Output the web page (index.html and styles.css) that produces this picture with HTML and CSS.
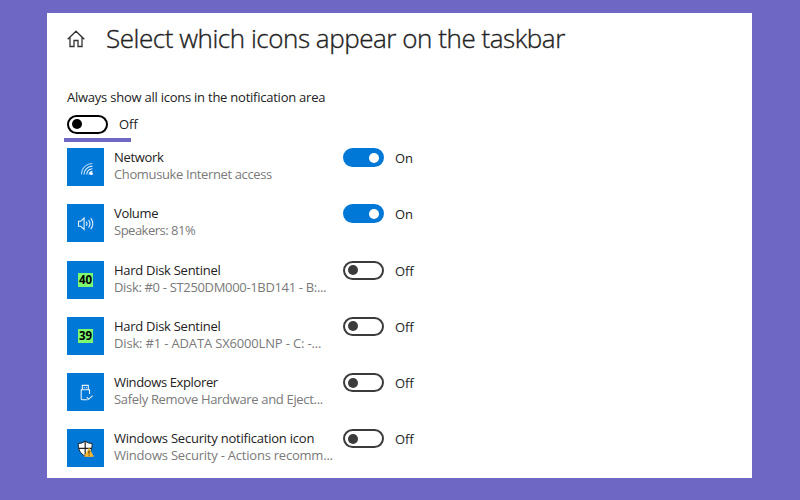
FILE: index.html
```
<!DOCTYPE html>
<html lang="en">
<head>
    <meta charset="UTF-8">
    <meta name="viewport" content="width=device-width, initial-scale=1.0">
    <title>Taskbar icons</title>
    <link rel="stylesheet" href="styles.css">
</head>
<body>
    <main class="settings">
        <header class="header">
            <svg class="home" viewBox="0 0 18 18">
                <path d="M.7 9.2 9 1.2l8.3 8M3 7.2v9.3h4v-6h4v6h4V7.2"/>
            </svg>
            <h1>Select which icons appear on the taskbar</h1>
        </header>
        <p class="all-label">Always show all icons in the notification area</p>
        <div class="all-toggle">
            <button class="toggle strong" aria-label="Always show all icons"></button>
            <span>Off</span>
        </div>
        <div class="underline"></div>
        <ul class="icon-list">
            <li>
                <div class="tile">
                    <svg viewBox="0 0 37 37">
                        <g class="line">
                            <path class="faint" d="M14.4 25.5A11 11 0 0 1 25.4 14.5"/>
                            <path d="M17 25.5a8.4 8.4 0 0 1 8.4-8.4M19.7 25.5a5.7 5.7 0 0 1 5.7-5.7M22.2 25.5a3.2 3.2 0 0 1 3.2-3.2"/>
                        </g>
                        <circle cx="24.4" cy="24.5" r="1.5" fill="#fff"/>
                    </svg>
                </div>
                <div class="info"><h2 class="network">Network</h2><p class="access">Chomusuke Internet access</p></div>
                <button class="toggle on" aria-label="Network"></button>
                <span class="state">On</span>
            </li>
            <li>
                <div class="tile">
                    <svg viewBox="0 0 37 37">
                        <path class="line" d="M11.5 16.2h2.3l3.3-3.2v11.5l-3.3-3.2h-2.3zM19.3 16.7q1.5 2 0 4.1M21.5 15q3 3.8 0 7.5M23.7 13.2q4.2 5.5 0 11"/>
                    </svg>
                </div>
                <div class="info"><h2 class="volume">Volume</h2><p class="speakers">Speakers: 81%</p></div>
                <button class="toggle on" aria-label="Volume"></button>
                <span class="state">On</span>
            </li>
            <li>
                <div class="tile"><span class="temp">40</span></div>
                <div class="info"><h2 class="disk">Hard Disk Sentinel</h2><p class="disk0">Disk: #0 - ST250DM000-1BD141 - B:...</p></div>
                <button class="toggle" aria-label="Hard Disk Sentinel"></button>
                <span class="state">Off</span>
            </li>
            <li>
                <div class="tile"><span class="temp">39</span></div>
                <div class="info"><h2 class="disk">Hard Disk Sentinel</h2><p class="disk1">Disk: #1 - ADATA SX6000LNP - C: -...</p></div>
                <button class="toggle" aria-label="Hard Disk Sentinel"></button>
                <span class="state">Off</span>
            </li>
            <li>
                <div class="tile">
                    <svg viewBox="0 0 37 37">
                        <path class="line" d="M15.3 15.8v-4.4h6v4.4M22.5 20v-4.2h-8.3v8.7q0 1.3 1.3 1.3h5M17.2 13.2v1M19.4 13.2v1M19.8 23.2l1.8 2.1 4-3.7"/>
                    </svg>
                </div>
                <div class="info"><h2 class="explorer">Windows Explorer</h2><p class="remove">Safely Remove Hardware and Eject...</p></div>
                <button class="toggle" aria-label="Windows Explorer"></button>
                <span class="state">Off</span>
            </li>
            <li>
                <div class="tile">
                    <svg viewBox="0 0 37 37">
                        <path d="M18.2 11.2q3 2.3 6.9 2.3c.2 6.3-2 10.1-6.9 12.7-4.9-2.6-7.1-6.4-6.9-12.7q3.9 0 6.9-2.3z" fill="#fff" stroke="#222"/>
                        <path d="M18.2 11.5v14M11.5 18.3h13.4" stroke="#222" stroke-width="1.2"/>
                        <path d="M22 18.2l4.4 8.2h-8.8z" fill="#fbb829" stroke="#fbb829" stroke-width=".7" stroke-linejoin="round"/>
                        <path d="M22 20.7v3M22 24.6v1" stroke="#222"/>
                    </svg>
                </div>
                <div class="info"><h2 class="security">Windows Security notification icon</h2><p class="actions">Windows Security - Actions recomm...</p></div>
                <button class="toggle" aria-label="Windows Security notification icon"></button>
                <span class="state">Off</span>
            </li>
        </ul>
    </main>
</body>
</html>
```
FILE: styles.css
```
* {
    box-sizing: border-box;
}
body {
    margin: 0;
    height: 500px;
    padding: 13px 48px 22px 47px;
    background-color: #6f67c4;
    font-family: "Open Sans", "Noto Sans", sans-serif;
    font-size: 13px;
    color: #222;
    overflow: hidden;
}
h1, h2, p, ul {
    margin: 0;
    padding: 0;
    font-weight: normal;
}
.settings {
    height: 465px;
    padding-left: 20px;
    background-color: #fff;
}
.header {
    display: flex;
    align-items: center;
    height: 52px;
}
.home {
    width: 18px;
    height: 18px;
    margin-right: 21px;
    fill: none;
    stroke: #333;
    stroke-width: 1.3;
}
h1 {
    margin-top: -2px;
    font-size: 26px;
    font-weight: 300;
    line-height: 36px;
    letter-spacing: -.46px;
    -webkit-text-stroke: .35px #222;
    white-space: nowrap;
}
.all-label {
    margin-top: 23px;
    line-height: 18px;
    letter-spacing: -.24px;
}
.all-toggle {
    display: flex;
    align-items: center;
    gap: 11px;
    height: 20px;
    margin-top: 8px;
}
.toggle {
    display: flex;
    align-items: center;
    width: 41px;
    height: 19px;
    padding: 0 3px;
    border: 2px solid #3b3b3b;
    border-radius: 10px;
    background-color: #fff;
}
.toggle::before {
    content: "";
    width: 10px;
    height: 10px;
    border-radius: 50%;
    background-color: #3b3b3b;
}
.toggle.strong {
    border-color: #000;
}
.toggle.strong::before {
    background-color: #000;
}
.toggle.on {
    justify-content: flex-end;
    border-color: #0078d7;
    background-color: #0078d7;
}
.toggle.on::before {
    background-color: #fff;
}
.underline {
    width: 67px;
    height: 4px;
    margin: 4px 0 0 -3px;
    background-color: #6f67c4;
}
.icon-list {
    margin-top: 6px;
    list-style: none;
}
.icon-list li {
    display: flex;
    align-items: flex-start;
    height: 56.3px;
}
.tile {
    display: flex;
    align-items: center;
    justify-content: center;
    width: 37px;
    height: 38px;
    background-color: #0078d7;
}
.tile svg {
    width: 37px;
    height: 37px;
}
.line {
    fill: none;
    stroke: #e5f1fb;
    stroke-width: 1.1;
}
.faint {
    opacity: .7;
}
.temp {
    width: 15px;
    height: 14px;
    background-color: #7dfb70;
    color: #000;
    font-size: 11.5px;
    font-weight: 700;
    line-height: 14px;
    text-align: center;
}
.info {
    width: 229px;
    margin-left: 10px;
    padding-top: 1px;
    white-space: nowrap;
}
.info h2 {
    font-size: 13px;
    line-height: 17px;
}
.info p {
    line-height: 17px;
    color: #7a7a7a;
}
.state {
    margin: 1px 0 0 11px;
    line-height: 18px;
}
/* tighten the text to the widths of Segoe UI */
.network, .volume {
    letter-spacing: -.34px;
}
.access, .explorer {
    letter-spacing: -.37px;
}
.info .speakers {
    letter-spacing: -.5px;
}
.disk {
    letter-spacing: -.28px;
}
.disk0, .remove {
    letter-spacing: -.33px;
}
.disk1 {
    letter-spacing: -.16px;
}
.security, .actions {
    letter-spacing: -.22px;
}
```
